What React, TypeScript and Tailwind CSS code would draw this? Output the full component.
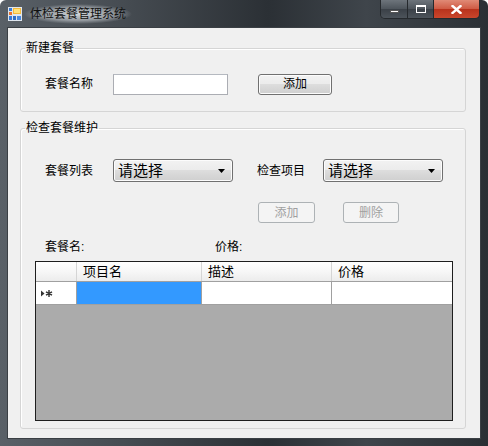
import React from "react";

function AppIcon() {
  return (
    <svg width="14" height="14" viewBox="0 0 14 14">
      <rect x="0" y="0" width="14" height="14" fill="#dfe6ee" />
      <rect x="1" y="1" width="3" height="3" fill="#3a7bd5" />
      <rect x="5" y="1" width="8" height="6" fill="#f6b93b" />
      <rect x="6" y="2" width="6" height="4" fill="#ffe27a" />
      <rect x="1" y="5" width="3" height="3" fill="#e8732c" />
      <rect x="1" y="9" width="3" height="4" fill="#3a7bd5" />
      <rect x="5" y="9" width="3" height="4" fill="#2f6fc6" />
      <rect x="9" y="9" width="4" height="4" fill="#4b8be0" />
    </svg>
  );
}

function WinButton({ children, disabled }: { children: React.ReactNode; disabled?: boolean }) {
  return disabled ? (
    <div className="h-full flex items-center justify-center rounded-[3px] border border-[#adb2b5] bg-[#f4f4f4] text-[#a0a0a0]">
      {children}
    </div>
  ) : (
    <div className="h-full flex items-center justify-center rounded-[3px] border border-[#707070] bg-[linear-gradient(#f2f2f2,#ebebeb_50%,#dddddd_50%,#cfcfcf)] shadow-[inset_0_0_0_1px_#fcfcfc]">
      {children}
    </div>
  );
}

function Combo() {
  return (
    <div className="w-[120px] h-[23px] flex items-center rounded-[3px] border border-[#707070] bg-[linear-gradient(#f2f2f2,#ebebeb_50%,#dddddd_50%,#cfcfcf)] shadow-[inset_0_0_0_1px_#fcfcfc] pl-[4px] pr-[7px]">
      <span className="text-[15px] leading-[20px]">请选择</span>
      <svg className="ml-auto" width="7" height="4" viewBox="0 0 7 4">
        <path d="M0 0 H7 L3.5 4 Z" fill="#000" />
      </svg>
    </div>
  );
}

export default function App() {
  return (
    <div className="w-[488px] h-[446px] flex flex-col rounded-t-[6px] bg-[linear-gradient(90deg,#596067_0%,#464c52_25%,#2b3035_55%,#3f454b_75%,#2a2f34_100%)] font-['Liberation_Sans','Noto_Sans_CJK_SC',sans-serif] text-[12px] text-black">
      {/* 标题栏 */}
      <div className="h-[27px] flex items-start">
        <div className="ml-[8px] mt-[7px]">
          <AppIcon />
        </div>
        <div className="ml-[2px] mt-[4px] px-[6px] leading-[20px] text-[12px] text-[#111] rounded-[10px] bg-[radial-gradient(closest-side,rgba(225,228,232,0.9),rgba(205,210,215,0.55)_65%,transparent)]">
          体检套餐管理系统
        </div>
        <div className="ml-auto mr-[8px] flex h-[19px] rounded-b-[5px] border border-t-0 border-[#25292d] overflow-hidden">
          <div className="w-[27px] flex items-end justify-center pb-[5px] bg-[linear-gradient(#6d747b,#4d545b_50%,#3a4047_50%,#4c535a)] border-r border-[#25292d]">
            <div className="w-[9px] h-[3px] bg-white border border-[#555]" />
          </div>
          <div className="w-[26px] flex items-center justify-center bg-[linear-gradient(#6d747b,#4d545b_50%,#3a4047_50%,#4c535a)] border-r border-[#25292d]">
            <div className="w-[10px] h-[8px] border border-white border-t-[2px]" />
          </div>
          <div className="w-[45px] flex items-center justify-center bg-[linear-gradient(#e08a76,#cf5a43_50%,#b8321c_50%,#c9462c)]">
            <svg width="11" height="9" viewBox="0 0 11 9">
              <path d="M1.5 1 L9.5 8 M9.5 1 L1.5 8" stroke="#fff" strokeWidth="2.4" strokeLinecap="square" />
            </svg>
          </div>
        </div>
      </div>

      {/* 客户区 */}
      <div className="mx-[7px] mb-[7px] flex-1 border border-[#3a3f44] bg-[#f0f0f0] flex flex-col">
        {/* 新建套餐 */}
        <fieldset className="ml-[12px] w-[446px] mt-[12px] h-[72px] border border-[#d5d5d5] rounded-[3px] shadow-[inset_1px_1px_0_#fff]">
          <legend className="ml-[4px] px-[1px] leading-[16px]">新建套餐</legend>
          <div className="pl-[24px] mt-[17px] flex items-center h-[22px]">
            <span className="w-[68px]">套餐名称</span>
            <div className="w-[115px] h-[21px] border border-[#abadb3] border-t-[#b5b9c0] bg-white" />
            <div className="ml-[30px] w-[74px] h-[21px]">
              <WinButton>添加</WinButton>
            </div>
          </div>
        </fieldset>

        {/* 检查套餐维护 */}
        <fieldset className="ml-[12px] w-[446px] mt-[8px] h-[309px] border border-[#d5d5d5] rounded-[3px] shadow-[inset_1px_1px_0_#fff]">
          <legend className="ml-[4px] px-[1px] leading-[16px]">检查套餐维护</legend>
          <div className="pl-[14px] flex flex-col">
            <div className="ml-[10px] mt-[23px] flex items-center h-[23px]">
              <span className="w-[68px]">套餐列表</span>
              <Combo />
              <span className="ml-[24px] w-[66px]">检查项目</span>
              <Combo />
            </div>

            <div className="ml-[223px] mt-[20px] flex h-[21px]">
              <div className="w-[57px]">
                <WinButton disabled>添加</WinButton>
              </div>
              <div className="ml-[28px] w-[56px]">
                <WinButton disabled>删除</WinButton>
              </div>
            </div>

            <div className="ml-[10px] mt-[16px] flex leading-[16px]">
              <span className="w-[170px]">套餐名:</span>
              <span>价格:</span>
            </div>

            {/* 数据表格 */}
            <div className="mt-[6px] w-[418px] h-[160px] border border-[#1e1e1e] bg-[#ababab] flex flex-col">
              <div className="flex h-[20px] bg-[linear-gradient(#ffffff,#f7f7f7_50%,#ececec)] border-b border-[#a0a0a0] text-[13px] leading-[19px]">
                <div className="w-[41px] border-r border-[#d5d5d5]" />
                <div className="w-[125px] border-r border-[#d5d5d5] pl-[6px]">项目名</div>
                <div className="w-[130px] border-r border-[#d5d5d5] pl-[6px]">描述</div>
                <div className="flex-1 pl-[6px]">价格</div>
              </div>
              <div className="flex h-[23px] bg-white border-b border-[#a0a0a0]">
                <div className="w-[41px] border-r border-[#a0a0a0] flex items-center pl-[5px]">
                  <svg width="12" height="7" viewBox="0 0 12 7">
                    <path d="M0 0.5 L3.5 3.5 L0 6.5 Z" fill="#333" />
                    <path d="M8 0 V7 M5 1.8 L11 5.2 M11 1.8 L5 5.2" stroke="#333" strokeWidth="1.4" />
                  </svg>
                </div>
                <div className="w-[125px] bg-[#3399ff] border-r border-[#a0a0a0]" />
                <div className="w-[130px] border-r border-[#a0a0a0]" />
                <div className="flex-1" />
              </div>
            </div>
          </div>
        </fieldset>
      </div>
    </div>
  );
}
